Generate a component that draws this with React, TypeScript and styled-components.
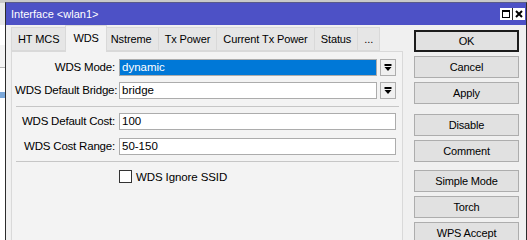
import React from 'react';
import styled, { createGlobalStyle } from 'styled-components';

const Global = createGlobalStyle`
  html, body { margin: 0; padding: 0; background: #c9c9c9; }
  body { font-family: "Liberation Sans", Arial, sans-serif; font-size: 11px; color: #000; }
  #root { width: 527px; height: 240px; overflow: hidden; }
`;

const Screen = styled.div`
  display: flex;
  width: 527px;
  height: 240px;
  overflow: hidden;
  background: #c9c9c9;
`;

const Behind = styled.div`
  width: 5px;
  flex: none;
  display: flex;
  flex-direction: column;
  padding-top: 3px;
`;

const BehindBit = styled.div<{ $h: number; $c: string }>`
  height: ${(p) => p.$h}px;
  background: ${(p) => p.$c};
  flex: none;
`;

const Window = styled.div`
  flex: 1;
  margin-top: 2px;
  display: flex;
  flex-direction: column;
  border-left: 1px solid #2c2c2c;
  border-right: 1px solid #2c2c2c;
  border-top: 1px solid #5a5a8a;
  background: #f0f0f0;
  min-width: 0;
`;

const TitleBar = styled.div`
  height: 22px;
  flex: none;
  display: flex;
  align-items: center;
  justify-content: space-between;
  background: #4d51c6;
  color: #fff;
  padding: 0 1px 0 5px;
`;

const TitleText = styled.span`
  font-size: 11px;
`;

const TitleButtons = styled.div`
  display: flex;
  gap: 1px;
  background: #2c2c2c;
`;

const TitleButton = styled.div`
  width: 12px;
  height: 12px;
  background: #fff;
  display: flex;
  align-items: center;
  justify-content: center;
`;

const Body = styled.div`
  flex: 1;
  display: flex;
  min-height: 0;
`;

const LeftPane = styled.div`
  width: 397px;
  box-sizing: border-box;
  flex: none;
  padding: 0 0 0 5px;
  display: flex;
  flex-direction: column;
`;

const Tabs = styled.div`
  display: flex;
  align-items: flex-end;
  height: 26px;
  position: relative;
  z-index: 1;
  font-size: 11px;
  letter-spacing: -0.1px;
`;

const Tab = styled.div<{ $active?: boolean }>`
  height: ${(p) => (p.$active ? 27 : 24)}px;
  min-width: 22px;
  box-sizing: border-box;
  padding: ${(p) => (p.$active ? '0 7px 2px' : '0 6px')};
  margin-left: ${(p) => (p.$active ? '-1px' : '0')};
  margin-right: ${(p) => (p.$active ? '-2px' : '0')};
  margin-bottom: ${(p) => (p.$active ? '-1px' : '0')};
  display: flex;
  align-items: center;
  justify-content: center;
  border: 1px solid #d9d9d9;
  border-bottom: ${(p) => (p.$active ? 'none' : '1px solid #d9d9d9')};
  border-left: ${(p) => (p.$active ? '1px solid #d9d9d9' : 'none')};
  background: ${(p) => (p.$active ? '#f3f3f3' : '#e6e6e6')};
  position: relative;
  z-index: ${(p) => (p.$active ? 2 : 1)};
  white-space: nowrap;
  &:first-child { border-left: 1px solid #d9d9d9; }
`;

const Panel = styled.div`
  flex: 1;
  border: 1px solid #d9d9d9;
  border-bottom: none;
  background: #f3f3f3;
  padding: 7px 6px 0 3px;
  display: flex;
  flex-direction: column;
`;

const Section = styled.div<{ $gap: number }>`
  display: grid;
  grid-template-columns: 100px 1fr;
  column-gap: 4px;
  row-gap: ${(p) => p.$gap}px;
  align-items: center;
`;

const Label = styled.label`
  text-align: right;
  white-space: nowrap;
  font-size: 11.5px;
  letter-spacing: -0.2px;
  line-height: 13px;
`;

const Field = styled.div`
  display: flex;
  gap: 3px;
  height: 17px;
`;

const Input = styled.div<{ $selected?: boolean }>`
  flex: 1;
  box-sizing: border-box;
  height: 17px;
  border: 1px solid #acacac;
  background: ${(p) => (p.$selected ? '#0078d7' : '#fff')};
  color: ${(p) => (p.$selected ? '#fff' : '#000')};
  padding: 0 2px;
  display: flex;
  align-items: center;
  line-height: 15px;
  font-size: 11.5px;
`;

const DropButton = styled.div`
  width: 16px;
  height: 17px;
  box-sizing: border-box;
  border: 1px solid #adadad;
  background: #f0f0f0;
  display: flex;
  align-items: center;
  justify-content: center;
`;

const Separator = styled.div<{ $top: number; $bottom: number }>`
  height: 1px;
  background: #c6c6c6;
  margin: ${(p) => p.$top}px -3px ${(p) => p.$bottom}px 1px;
`;

const CheckRow = styled.div`
  display: flex;
  align-items: center;
  gap: 4px;
  height: 13px;
  padding-left: 104px;
  font-size: 11.5px;
  letter-spacing: -0.1px;
`;

const CheckBox = styled.div`
  width: 13px;
  height: 13px;
  box-sizing: border-box;
  border: 1px solid #333;
  background: #fff;
`;

const ButtonColumn = styled.div`
  width: 105px;
  flex: none;
  margin-left: 11px;
  padding-top: 5px;
  display: flex;
  flex-direction: column;
`;

const Button = styled.div<{ $default?: boolean; $gapAfter?: number }>`
  height: 22px;
  box-sizing: border-box;
  border: ${(p) => (p.$default ? '2px solid #1c1c1c' : '1px solid #adadad')};
  background: #e1e1e1;
  display: flex;
  align-items: center;
  justify-content: center;
  margin-bottom: ${(p) => p.$gapAfter ?? 4}px;
  flex: none;
  font-size: 11px;
  letter-spacing: -0.15px;
`;

const DropIcon = () => (
  <svg width="8" height="8" viewBox="0 0 8 8">
    <rect x="0.5" y="0" width="7" height="2" fill="#000" />
    <polygon points="0.5,3 7.5,3 4,7" fill="#000" />
  </svg>
);

const MaxIcon = () => (
  <svg width="10" height="10" viewBox="0 0 10 10">
    <rect x="1.5" y="1.5" width="7" height="7" fill="none" stroke="#000" strokeWidth="1" />
    <rect x="1" y="1" width="8" height="2" fill="#000" />
  </svg>
);

const CloseIcon = () => (
  <svg width="10" height="10" viewBox="0 0 10 10">
    <path d="M2 2 L8 8 M8 2 L2 8" stroke="#000" strokeWidth="2" />
  </svg>
);

const tabs = ['HT MCS', 'WDS', 'Nstreme', 'Tx Power', 'Current Tx Power', 'Status', '...'];

export default function App() {
  return (
    <>
      <Global />
      <Screen>
        <Behind>
          <BehindBit $h={22} $c="#e9e9e9" />
          <BehindBit $h={20} $c="#ffffff" />
          <BehindBit $h={22} $c="#f4f4f4" />
          <BehindBit $h={1} $c="#b5b5b5" />
          <BehindBit $h={24} $c="#ffffff" />
          <BehindBit $h={6} $c="#7aa7d9" />
          <BehindBit $h={142} $c="#ffffff" />
        </Behind>
        <Window>
          <TitleBar>
            <TitleText>Interface &lt;wlan1&gt;</TitleText>
            <TitleButtons>
              <TitleButton><MaxIcon /></TitleButton>
              <TitleButton><CloseIcon /></TitleButton>
            </TitleButtons>
          </TitleBar>
          <Body>
            <LeftPane>
              <Tabs>
                {tabs.map((t) => (
                  <Tab key={t} $active={t === 'WDS'}>{t}</Tab>
                ))}
              </Tabs>
              <Panel>
                <Section $gap={6}>
                  <Label>WDS Mode:</Label>
                  <Field>
                    <Input $selected>dynamic</Input>
                    <DropButton><DropIcon /></DropButton>
                  </Field>
                  <Label>WDS Default Bridge:</Label>
                  <Field>
                    <Input>bridge</Input>
                    <DropButton><DropIcon /></DropButton>
                  </Field>
                </Section>
                <Separator $top={7} $bottom={6} />
                <Section $gap={8}>
                  <Label>WDS Default Cost:</Label>
                  <Field><Input>100</Input></Field>
                  <Label>WDS Cost Range:</Label>
                  <Field><Input>50-150</Input></Field>
                </Section>
                <Separator $top={6} $bottom={8} />
                <CheckRow>
                  <CheckBox />
                  <span>WDS Ignore SSID</span>
                </CheckRow>
              </Panel>
            </LeftPane>
            <ButtonColumn>
              <Button $default>OK</Button>
              <Button>Cancel</Button>
              <Button $gapAfter={10}>Apply</Button>
              <Button>Disable</Button>
              <Button $gapAfter={8}>Comment</Button>
              <Button>Simple Mode</Button>
              <Button>Torch</Button>
              <Button>WPS Accept</Button>
            </ButtonColumn>
          </Body>
        </Window>
      </Screen>
    </>
  );
}
